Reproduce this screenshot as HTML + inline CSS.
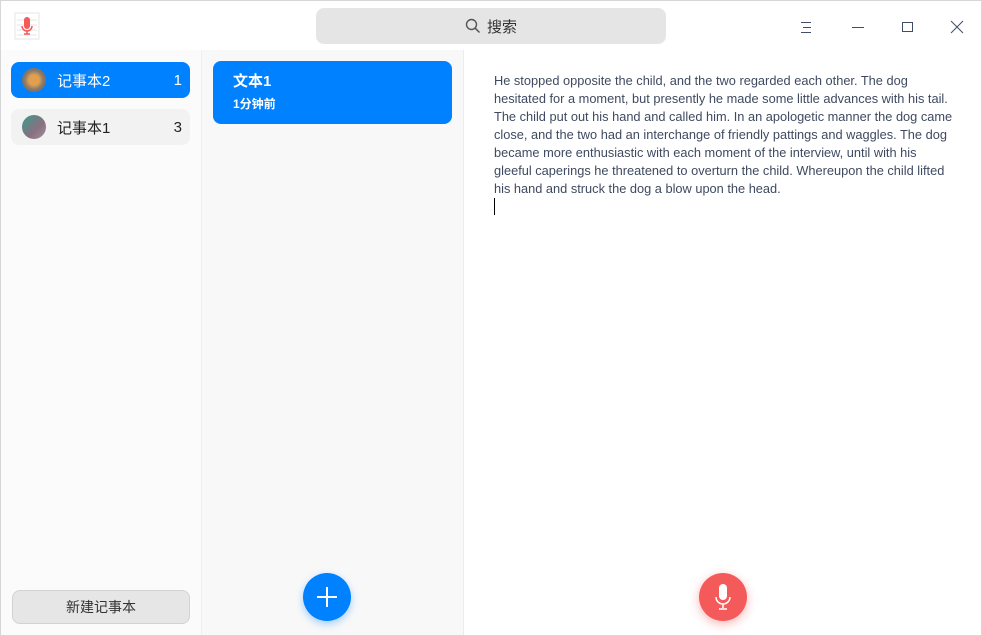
<!DOCTYPE html>
<html><head><meta charset="utf-8"><style>
*{margin:0;padding:0;box-sizing:border-box}
body{width:982px;height:636px;overflow:hidden;background:#fff;font-family:"Liberation Sans","Noto Sans CJK SC",sans-serif;position:relative}
.win{position:absolute;left:0;top:0;width:982px;height:636px;border:1px solid #d6d6d6;}
.title{position:absolute;left:1px;top:1px;width:980px;height:49px;background:#fff}
.left{position:absolute;left:1px;top:50px;width:201px;height:585px;background:#fbfbfb;border-right:1px solid #eeeeee}
.mid{position:absolute;left:202px;top:50px;width:262px;height:585px;background:#f8f8f8;border-right:1px solid #ececec}
.right{position:absolute;left:464px;top:50px;width:517px;height:585px;background:#fff}
.search{position:absolute;left:316px;top:8px;width:350px;height:36px;background:#e5e5e5;border-radius:8px;font-size:15px;color:#333;display:flex;align-items:center;justify-content:center;gap:6px}
.nb{position:absolute;left:11px;width:179px;height:36px;border-radius:8px;display:flex;align-items:center;font-size:15px}
.nb .av{width:24px;height:24px;border-radius:50%;margin:0 11px 0 11px}
.nb .n{margin-left:auto;margin-right:8px}
.note{position:absolute;left:213px;top:61px;width:239px;height:63px;background:#0081ff;border-radius:8px;color:#fff;padding:12px 20px}
.txt{position:absolute;left:494px;top:72px;width:480px;white-space:nowrap;font-size:12.8px;line-height:18px;color:#3f4a60;font-family:"Liberation Sans",sans-serif}
.btn{position:absolute;left:12px;top:590px;width:178px;height:34px;background:#e6e6e6;border:1px solid #d2d2d2;border-radius:8px;font-size:14px;color:#333;text-align:center;line-height:32px}
.fab{position:absolute;width:48px;height:48px;border-radius:50%}
</style></head><body>
<div class="win"></div>
<div class="title"></div>
<svg style="position:absolute;left:14px;top:12px" width="26" height="28" viewBox="0 0 26 28"><rect x="1" y="1" width="24" height="26" fill="#fff" stroke="#e6e6e6"/><g stroke="#e4e4e4"><line x1="3" y1="8" x2="23" y2="8"/><line x1="3" y1="13" x2="23" y2="13"/><line x1="3" y1="18" x2="23" y2="18"/><line x1="3" y1="23" x2="23" y2="23"/></g><rect x="10" y="5" width="6" height="12" rx="3" fill="#f55a5a"/><path d="M8 14a5 5 0 0 0 10 0M13 19v3M10 22h6" stroke="#f55a5a" stroke-width="1.5" fill="none"/></svg>
<div class="search"><svg width="16" height="16" viewBox="0 0 16 16"><circle cx="6.5" cy="6.5" r="5" stroke="#555" stroke-width="1.4" fill="none"/><line x1="10.2" y1="10.2" x2="14.5" y2="14.5" stroke="#555" stroke-width="1.5"/></svg>搜索</div>
<svg style="position:absolute;left:800px;top:20px" width="14" height="14"><g stroke="#414d68" stroke-width="1"><line x1="1" y1="2.5" x2="11" y2="2.5"/><line x1="3" y1="7.5" x2="11" y2="7.5"/><line x1="1" y1="12.5" x2="11" y2="12.5"/></g></svg>
<svg style="position:absolute;left:851px;top:20px" width="14" height="14"><line x1="1" y1="7.5" x2="13" y2="7.5" stroke="#414d68"/></svg>
<svg style="position:absolute;left:901px;top:20px" width="14" height="14"><rect x="1.5" y="2.5" width="10" height="9" stroke="#414d68" fill="none"/></svg>
<svg style="position:absolute;left:950px;top:20px" width="14" height="14"><path d="M1 1L13 13M13 1L1 13" stroke="#414d68"/></svg>
<div class="left"></div><div class="mid"></div><div class="right"></div>
<div class="nb" style="top:62px;background:#0081ff;color:#fff"><div class="av" style="background:radial-gradient(circle,#e0a050 30%,#8a7a6a 55%,#666 90%)"></div>记事本2<span class="n">1</span></div>
<div class="nb" style="top:109px;background:#f2f2f2;color:#222"><div class="av" style="background:linear-gradient(135deg,#3a9a8a,#8a7080 60%,#a090a0)"></div>记事本1<span class="n">3</span></div>
<div class="btn">新建记事本</div>
<div class="note"><div style="font-size:15px;line-height:18px;font-weight:bold">文本1</div><div style="font-size:12px;margin-top:4px;font-weight:bold">1分钟前</div></div>
<div class="txt">He stopped opposite the child, and the two regarded each other. The dog<br>hesitated for a moment, but presently he made some little advances with his tail.<br>The child put out his hand and called him. In an apologetic manner the dog came<br>close, and the two had an interchange of friendly pattings and waggles. The dog<br>became more enthusiastic with each moment of the interview, until with his<br>gleeful caperings he threatened to overturn the child. Whereupon the child lifted<br>his hand and struck the dog a blow upon the head.<br><span style="display:inline-block;width:1px;height:17px;background:#000"></span></div>
<div class="fab" style="left:303px;top:573px;background:#0081ff;box-shadow:0 3px 8px rgba(0,129,255,.35)"><svg width="48" height="48"><path d="M24 14v20M14 24h20" stroke="#fff" stroke-width="2"/></svg></div>
<div class="fab" style="left:699px;top:573px;background:#f55a5a;box-shadow:0 3px 10px rgba(245,90,90,.45)"><svg width="48" height="48"><rect x="20" y="11" width="8" height="16" rx="4" fill="#fff"/><path d="M17 24a7 7 0 0 0 14 0M24 31v4M20 36h8" stroke="#fff" stroke-width="1.5" fill="none"/></svg></div>
</body></html>
